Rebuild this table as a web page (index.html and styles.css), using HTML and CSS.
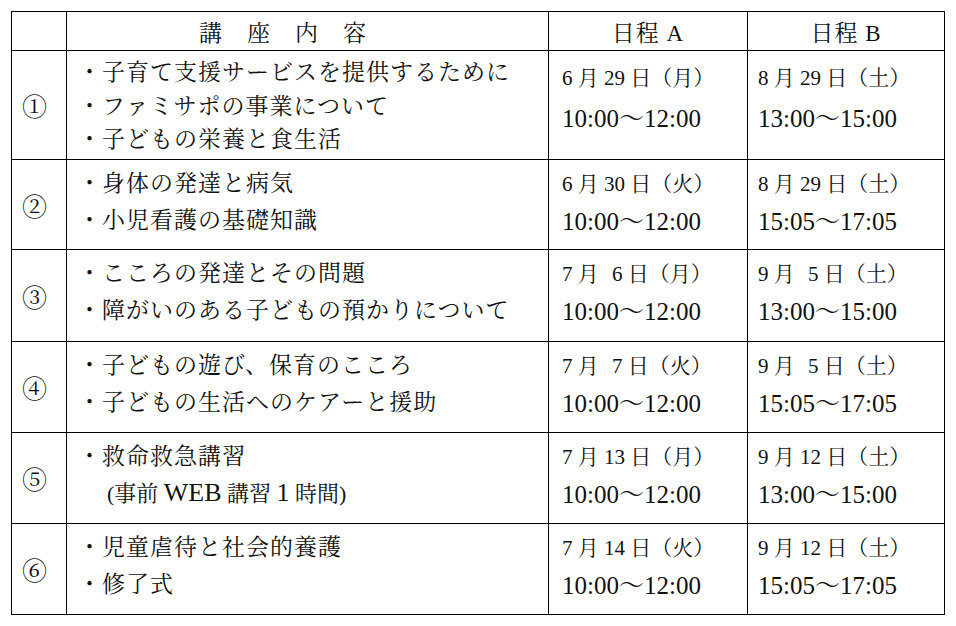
FILE: index.html
```html
<!DOCTYPE html>
<html lang="ja">
<head>
<meta charset="utf-8">
<title>講座日程</title>
<link rel="stylesheet" href="styles.css">
</head>
<body>
<div class="page">
<table class="sched">
<colgroup><col class="c-no"><col class="c-topic"><col class="c-a"><col class="c-b"></colgroup>
<thead>
<tr class="head">
<th class="h-no"></th>
<th class="h-topic">講　座　内　容</th>
<th class="h-day">日程 A</th>
<th class="h-day">日程 B</th>
</tr>
</thead>
<tbody>
<tr class="row r1">
<td class="no">①</td>
<td class="topic">
<div class="ln"><span>・子育て支援サービスを提供するために</span></div>
<div class="ln"><span>・ファミサポの事業について</span></div>
<div class="ln"><span>・子どもの栄養と食生活</span></div>
</td>
<td class="day day-a"><div class="ln date"><span>6 月 29 日（月）</span></div><div class="ln time"><span>10:00～12:00</span></div></td>
<td class="day day-b"><div class="ln date"><span>8 月 29 日（土）</span></div><div class="ln time"><span>13:00～15:00</span></div></td>
</tr>
<tr class="row r2">
<td class="no">②</td>
<td class="topic">
<div class="ln"><span>・身体の発達と病気</span></div>
<div class="ln"><span>・小児看護の基礎知識</span></div>
</td>
<td class="day day-a"><div class="ln date"><span>6 月 30 日（火）</span></div><div class="ln time"><span>10:00～12:00</span></div></td>
<td class="day day-b"><div class="ln date"><span>8 月 29 日（土）</span></div><div class="ln time"><span>15:05～17:05</span></div></td>
</tr>
<tr class="row r3">
<td class="no">③</td>
<td class="topic">
<div class="ln"><span>・こころの発達とその問題</span></div>
<div class="ln"><span>・障がいのある子どもの預かりについて</span></div>
</td>
<td class="day day-a"><div class="ln date"><span>7 月 <span class="pad">6</span> 日（月）</span></div><div class="ln time"><span>10:00～12:00</span></div></td>
<td class="day day-b"><div class="ln date"><span>9 月 <span class="pad">5</span> 日（土）</span></div><div class="ln time"><span>13:00～15:00</span></div></td>
</tr>
<tr class="row r4">
<td class="no">④</td>
<td class="topic">
<div class="ln"><span>・子どもの遊び、保育のこころ</span></div>
<div class="ln"><span>・子どもの生活へのケアーと援助</span></div>
</td>
<td class="day day-a"><div class="ln date"><span>7 月 <span class="pad">7</span> 日（火）</span></div><div class="ln time"><span>10:00～12:00</span></div></td>
<td class="day day-b"><div class="ln date"><span>9 月 <span class="pad">5</span> 日（土）</span></div><div class="ln time"><span>15:05～17:05</span></div></td>
</tr>
<tr class="row r5">
<td class="no">⑤</td>
<td class="topic">
<div class="ln"><span>・救命救急講習</span></div>
<div class="ln note"><span>(事前 <span class="wide">WEB</span> 講習 <span class="wide">1</span> 時間)</span></div>
</td>
<td class="day day-a"><div class="ln date"><span>7 月 13 日（月）</span></div><div class="ln time"><span>10:00～12:00</span></div></td>
<td class="day day-b"><div class="ln date"><span>9 月 12 日（土）</span></div><div class="ln time"><span>13:00～15:00</span></div></td>
</tr>
<tr class="row r6">
<td class="no">⑥</td>
<td class="topic">
<div class="ln"><span>・児童虐待と社会的養護</span></div>
<div class="ln"><span>・修了式</span></div>
</td>
<td class="day day-a"><div class="ln date"><span>7 月 14 日（火）</span></div><div class="ln time"><span>10:00～12:00</span></div></td>
<td class="day day-b"><div class="ln date"><span>9 月 12 日（土）</span></div><div class="ln time"><span>15:05～17:05</span></div></td>
</tr>
</tbody>
</table>
</div>
</body>
</html>
```

FILE: styles.css
```css
html, body {
  margin: 0;
  background: #fff;
}
body {
  font-family: "Liberation Serif", "Noto Serif CJK JP", "Noto Sans CJK JP", serif;
  color: #111;
}
.page {
  padding: 11px 0 0 11px;
}
.sched {
  border-collapse: collapse;
  table-layout: fixed;
  width: 933px;
}
.sched th,
.sched td {
  border: 1px solid #000;
  padding: 0;
}
.c-no { width: 55px; }
.c-topic { width: 482px; }
.c-a { width: 199px; }
.c-b { width: 197px; }

.head { height: 39px; }
.r1 { height: 109px; }
.r2 { height: 90px; }
.r3 { height: 92px; }
.r4, .r5, .r6 { height: 91px; }

.sched th {
  font-weight: normal;
  font-size: 23px;
  letter-spacing: 1px;
  vertical-align: middle;
  white-space: nowrap;
}
.h-topic {
  text-align: left;
  padding-left: 132px !important;
}
.h-day {
  text-align: center;
}

.no {
  font-size: 25px;
  vertical-align: middle;
  text-align: left;
  padding-left: 10px !important;
}

.ln {
  display: flex;
  align-items: center;
  height: 37px;
  white-space: pre;
}

.topic {
  vertical-align: top;
  padding: 3px 0 0 11px !important;
  font-size: 23px;
  letter-spacing: 1px;
}
.r1 .topic .ln { height: 33.5px; }

.note {
  font-size: 22px;
  letter-spacing: 0;
  padding-left: 29px;
}
.wide { font-size: 26px; }

.day {
  vertical-align: top;
  padding: 3px 0 0 13px !important;
}
.day-b { padding-left: 10px !important; }
.r1 .day { padding-top: 5px !important; }
.r1 .day .ln { height: 40px; }

.date { font-size: 21px; }
.time { font-size: 25px; }
.pad { margin-left: 8px; }
```
